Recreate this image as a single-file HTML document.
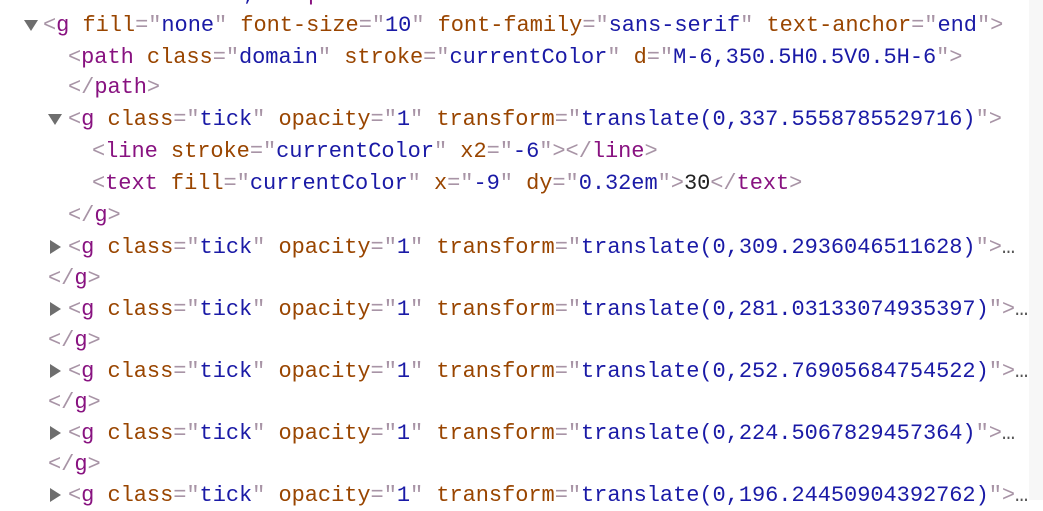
<html><head><style>
body{margin:0;width:1043px;height:500px;overflow:hidden;background:#fff;font-family:"Liberation Mono",monospace;font-size:22px;}
.l{position:absolute;height:31px;line-height:31px;white-space:pre;letter-spacing:-0.05px}
.t{color:#881280}.a{color:#994500}.v{color:#1a1aa6}.b{color:#a894a6}.x{color:#222}.e{color:#555}
.tri{position:absolute;width:0;height:0}
.down{border-left:7px solid transparent;border-right:7px solid transparent;border-top:11px solid #6e6e6e}
.right{border-top:7px solid transparent;border-bottom:7px solid transparent;border-left:11px solid #6e6e6e}
.sb{position:absolute;right:0;top:0;width:14px;height:500px;background:#f7f7f7}
</style></head><body>
<div class="l" style="left:45px;top:-21px"><span class="v">stroke-width: 1;</span><span class="b">"&gt;&lt;/</span><span class="t">path</span><span class="b">&gt;</span></div>

<div class="tri down" style="left:24px;top:20px"></div>
<div class="l" style="left:43px;top:10px"><span class="b">&lt;</span><span class="t">g</span> <span class="a">fill</span><span class="b">="</span><span class="v">none</span><span class="b">"</span> <span class="a">font-size</span><span class="b">="</span><span class="v">10</span><span class="b">"</span> <span class="a">font-family</span><span class="b">="</span><span class="v">sans-serif</span><span class="b">"</span> <span class="a">text-anchor</span><span class="b">="</span><span class="v">end</span><span class="b">"&gt;</span></div>

<div class="l" style="left:68px;top:42px"><span class="b">&lt;</span><span class="t">path</span> <span class="a">class</span><span class="b">="</span><span class="v">domain</span><span class="b">"</span> <span class="a">stroke</span><span class="b">="</span><span class="v">currentColor</span><span class="b">"</span> <span class="a">d</span><span class="b">="</span><span class="v">M-6,350.5H0.5V0.5H-6</span><span class="b">"&gt;</span></div>
<div class="l" style="left:68px;top:72px"><span class="b">&lt;/</span><span class="t">path</span><span class="b">&gt;</span></div>

<div class="tri down" style="left:48px;top:114px"></div>
<div class="l" style="left:68px;top:104px"><span class="b">&lt;</span><span class="t">g</span> <span class="a">class</span><span class="b">="</span><span class="v">tick</span><span class="b">"</span> <span class="a">opacity</span><span class="b">="</span><span class="v">1</span><span class="b">"</span> <span class="a">transform</span><span class="b">="</span><span class="v">translate(0,337.5558785529716)</span><span class="b">"&gt;</span></div>
<div class="l" style="left:92px;top:136px"><span class="b">&lt;</span><span class="t">line</span> <span class="a">stroke</span><span class="b">="</span><span class="v">currentColor</span><span class="b">"</span> <span class="a">x2</span><span class="b">="</span><span class="v">-6</span><span class="b">"&gt;&lt;/</span><span class="t">line</span><span class="b">&gt;</span></div>
<div class="l" style="left:92px;top:168px"><span class="b">&lt;</span><span class="t">text</span> <span class="a">fill</span><span class="b">="</span><span class="v">currentColor</span><span class="b">"</span> <span class="a">x</span><span class="b">="</span><span class="v">-9</span><span class="b">"</span> <span class="a">dy</span><span class="b">="</span><span class="v">0.32em</span><span class="b">"&gt;</span><span class="x">30</span><span class="b">&lt;/</span><span class="t">text</span><span class="b">&gt;</span></div>
<div class="l" style="left:68px;top:200px"><span class="b">&lt;/</span><span class="t">g</span><span class="b">&gt;</span></div>

<div class="tri right" style="left:50px;top:240px"></div>
<div class="l" style="left:68px;top:232px"><span class="b">&lt;</span><span class="t">g</span> <span class="a">class</span><span class="b">="</span><span class="v">tick</span><span class="b">"</span> <span class="a">opacity</span><span class="b">="</span><span class="v">1</span><span class="b">"</span> <span class="a">transform</span><span class="b">="</span><span class="v">translate(0,309.2936046511628)</span><span class="b">"&gt;</span><span class="e">…</span></div>
<div class="l" style="left:48px;top:263px"><span class="b">&lt;/</span><span class="t">g</span><span class="b">&gt;</span></div>

<div class="tri right" style="left:50px;top:302px"></div>
<div class="l" style="left:68px;top:294px"><span class="b">&lt;</span><span class="t">g</span> <span class="a">class</span><span class="b">="</span><span class="v">tick</span><span class="b">"</span> <span class="a">opacity</span><span class="b">="</span><span class="v">1</span><span class="b">"</span> <span class="a">transform</span><span class="b">="</span><span class="v">translate(0,281.03133074935397)</span><span class="b">"&gt;</span><span class="e">…</span></div>
<div class="l" style="left:48px;top:325px"><span class="b">&lt;/</span><span class="t">g</span><span class="b">&gt;</span></div>

<div class="tri right" style="left:50px;top:364px"></div>
<div class="l" style="left:68px;top:356px"><span class="b">&lt;</span><span class="t">g</span> <span class="a">class</span><span class="b">="</span><span class="v">tick</span><span class="b">"</span> <span class="a">opacity</span><span class="b">="</span><span class="v">1</span><span class="b">"</span> <span class="a">transform</span><span class="b">="</span><span class="v">translate(0,252.76905684754522)</span><span class="b">"&gt;</span><span class="e">…</span></div>
<div class="l" style="left:48px;top:387px"><span class="b">&lt;/</span><span class="t">g</span><span class="b">&gt;</span></div>

<div class="tri right" style="left:50px;top:426px"></div>
<div class="l" style="left:68px;top:418px"><span class="b">&lt;</span><span class="t">g</span> <span class="a">class</span><span class="b">="</span><span class="v">tick</span><span class="b">"</span> <span class="a">opacity</span><span class="b">="</span><span class="v">1</span><span class="b">"</span> <span class="a">transform</span><span class="b">="</span><span class="v">translate(0,224.5067829457364)</span><span class="b">"&gt;</span><span class="e">…</span></div>
<div class="l" style="left:48px;top:449px"><span class="b">&lt;/</span><span class="t">g</span><span class="b">&gt;</span></div>

<div class="tri right" style="left:50px;top:488px"></div>
<div class="l" style="left:68px;top:480px"><span class="b">&lt;</span><span class="t">g</span> <span class="a">class</span><span class="b">="</span><span class="v">tick</span><span class="b">"</span> <span class="a">opacity</span><span class="b">="</span><span class="v">1</span><span class="b">"</span> <span class="a">transform</span><span class="b">="</span><span class="v">translate(0,196.24450904392762)</span><span class="b">"&gt;</span><span class="e">…</span></div>
<div class="sb"></div>
</body></html>
